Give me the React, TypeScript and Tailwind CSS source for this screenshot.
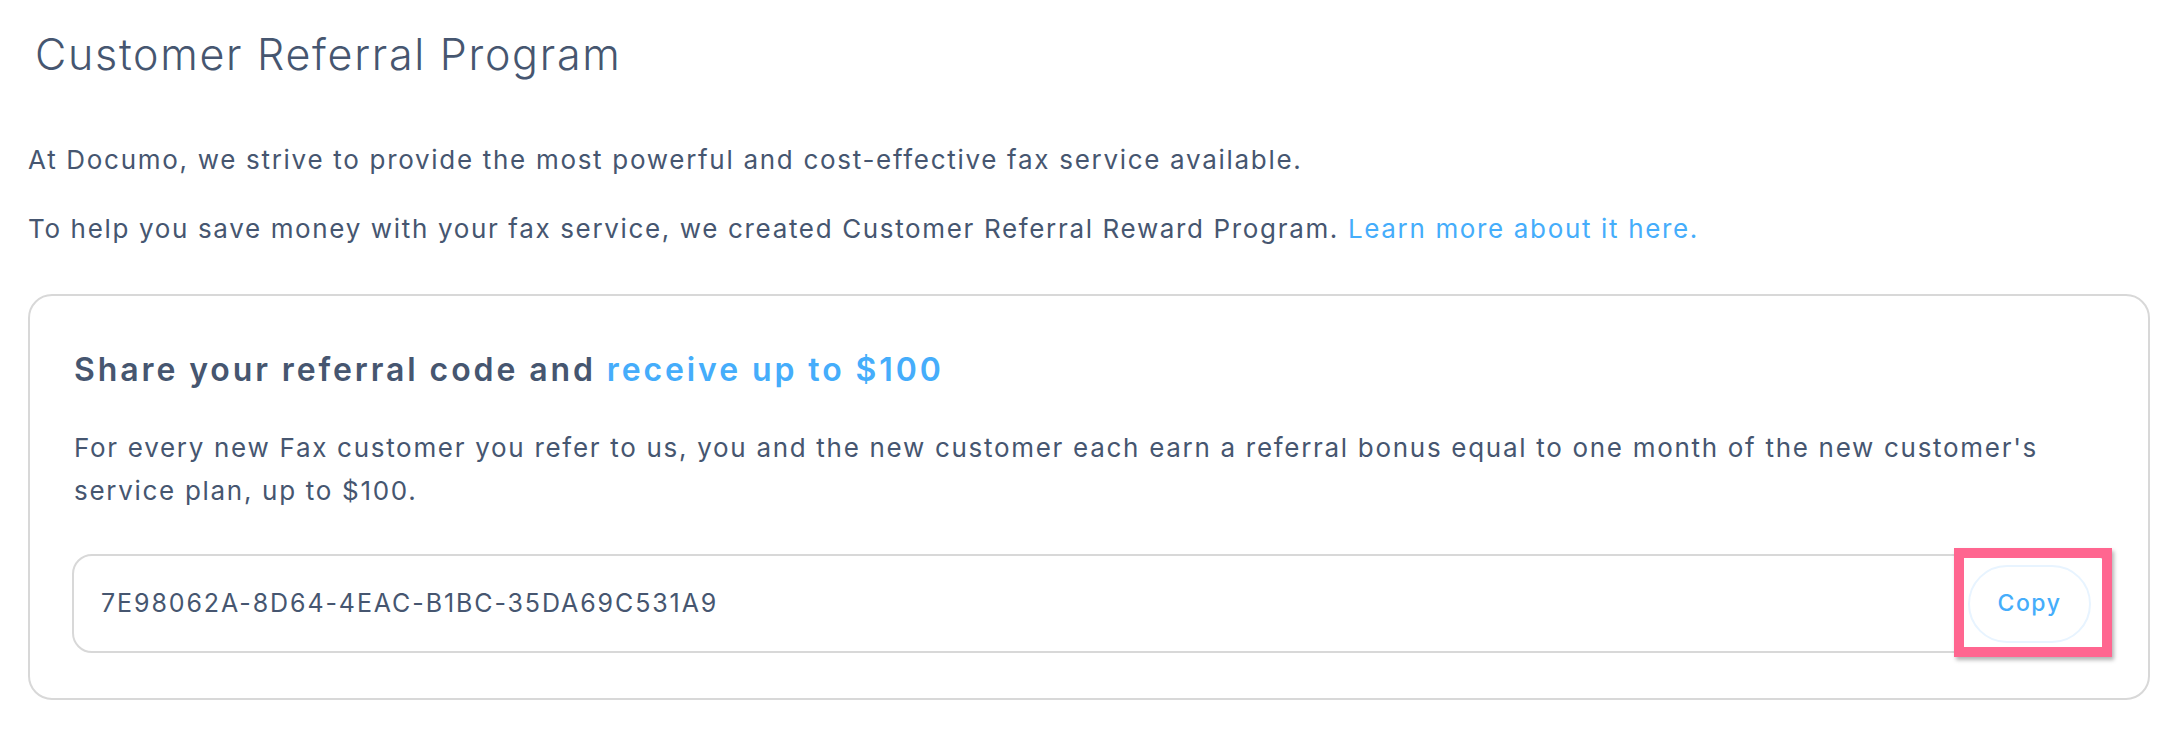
export default function App() {
  const code = '7E98062A-8D64-4EAC-B1BC-35DA69C531A9';

  return (
    <div className="w-full h-[732px] bg-white text-[#465670] font-['Inter','Liberation_Sans',sans-serif] pl-[28px] pr-[26px]">
      {/* Page title */}
      <h1 className="pt-[26px] pl-[7px] text-[43px] leading-[56px] font-light tracking-[1.7px]">
        Customer Referral Program
      </h1>

      <p className="mt-[60px] text-[26px] leading-[36px] font-normal tracking-[1.7px]">
        At Documo, we strive to provide the most powerful and cost-effective fax service available.
      </p>
      <p className="mt-[33px] text-[26px] leading-[36px] font-normal tracking-[1.65px]">
        To help you save money with your fax service, we created Customer Referral Reward Program.{' '}
        <a href="#" className="text-[#45adfb]">Learn more about it here.</a>
      </p>

      {/* Referral card */}
      <div className="mt-[47px] border-2 border-[#d8d8d8] rounded-[24px] pt-[52px] pb-[45px] pl-[42px] pr-[36px]">
        <h2 className="text-[32px] leading-[44px] font-semibold pl-[2px] tracking-[2.9px]">
          Share your referral code and <span className="text-[#45adfb]">receive up to $100</span>
        </h2>
        <p className="mt-[34px] text-[26px] leading-[43px] font-normal pl-[2px] pr-[40px] tracking-[1.7px]">
          For every new Fax customer you refer to us, you and the new customer each earn a referral bonus equal to one month of the new customer's service plan, up to $100.
        </p>

        <div className="relative mt-[42px] h-[99px] border-2 border-[#d8d8d8] rounded-[20px] flex items-center justify-between pl-[27px] pr-[19px]">
          <span className="text-[25px] font-normal tracking-[1.9px]">{code}</span>
          <button className="h-[78px] w-[123px] rounded-full border-2 border-[#e8f4ff] bg-white text-[#45adfb] text-[23px] font-medium tracking-[1.5px]">
            Copy
          </button>
          {/* highlight overlay */}
          <div className="absolute right-[-2px] top-[-8px] bottom-[-6px] w-[158px] border-[10px] border-[#ff6690] shadow-[2px_3px_4px_rgba(0,0,0,0.3)] pointer-events-none" />
        </div>
      </div>
    </div>
  );
}
